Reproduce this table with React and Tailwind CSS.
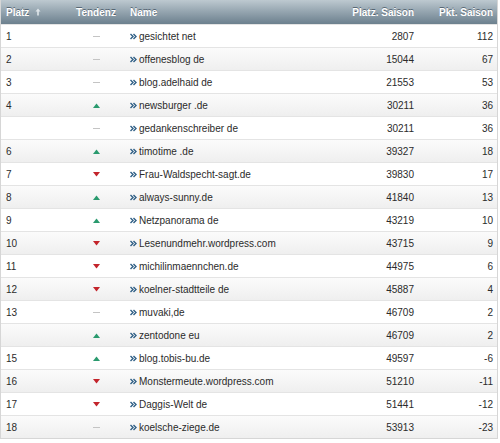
import React from 'react';

const rows = [
  ['1', 'same', 'gesichtet net', '2807', '112'],
  ['2', 'same', 'offenesblog de', '15044', '67'],
  ['3', 'same', 'blog.adelhaid de', '21553', '53'],
  ['4', 'up', 'newsburger .de', '30211', '36'],
  ['', 'same', 'gedankenschreiber de', '30211', '36'],
  ['6', 'up', 'timotime .de', '39327', '18'],
  ['7', 'down', 'Frau-Waldspecht-sagt.de', '39830', '17'],
  ['8', 'up', 'always-sunny.de', '41840', '13'],
  ['9', 'up', 'Netzpanorama de', '43219', '10'],
  ['10', 'down', 'Lesenundmehr.wordpress.com', '43715', '9'],
  ['11', 'down', 'michilinmaennchen.de', '44975', '6'],
  ['12', 'down', 'koelner-stadtteile de', '45887', '4'],
  ['13', 'same', 'muvaki,de', '46709', '2'],
  ['', 'up', 'zentodone eu', '46709', '2'],
  ['15', 'up', 'blog.tobis-bu.de', '49597', '-6'],
  ['16', 'down', 'Monstermeute.wordpress.com', '51210', '-11'],
  ['17', 'down', 'Daggis-Welt de', '51441', '-12'],
  ['18', 'same', 'koelsche-ziege.de', '53913', '-23'],
];

const cols = 'grid grid-cols-[66px_58px_1fr_82px_75px]';

function Trend({ t }) {
  if (t === 'up')
    return (
      <svg width="7" height="5" viewBox="0 0 7 5">
        <path d="M0 5 L3.5 0.5 L7 5 Z" fill="#2a9a6e" />
      </svg>
    );
  if (t === 'down')
    return (
      <svg width="7" height="5" viewBox="0 0 7 5">
        <path d="M0 0 L7 0 L3.5 4.5 Z" fill="#c3242b" />
      </svg>
    );
  return <span className="block w-[7px] h-px bg-[#c4c4c4]" />;
}

function Chevrons() {
  return (
    <svg width="7" height="7" viewBox="0 0 7 7" className="mr-[2px] shrink-0">
      <path d="M0.5 1 L3 3.5 L0.5 6 M3.5 1 L6 3.5 L3.5 6" fill="none" stroke="#2f5f86" strokeWidth="1.4" />
    </svg>
  );
}

export default function App() {
  return (
    <div className="w-[498px] bg-white text-[10px] text-[#2b2b2b] font-['Liberation_Sans',Arial,sans-serif]">
      <div className="border-x border-b border-[#d6d6d6]">
        <div
          className={`${cols} h-6 items-center font-bold text-white bg-gradient-to-b from-[#bdc9d0] to-[#6c808e] [text-shadow:0_-1px_0_rgba(40,55,70,0.6)]`}
        >
          <div className="pl-[5px] flex items-center gap-[6px]">
            Platz
            <svg width="6" height="8" viewBox="0 0 6 8">
              <path d="M3 0.5 L5.5 3.5 L3.8 3.5 L3.8 7.5 L2.2 7.5 L2.2 3.5 L0.5 3.5 Z" fill="#dfe6ea" />
            </svg>
          </div>
          <div className="text-center">Tendenz</div>
          <div className="pl-[5px]">Name</div>
          <div className="text-right pr-[8px]">Platz. Saison</div>
          <div className="text-right pr-[4px]">Pkt. Saison</div>
        </div>
        {rows.map((r, i) => (
          <div
            key={i}
            className={`${cols} h-[23px] items-center border-t border-[#e4e4e4] ${
              i % 2 === 1 ? 'bg-gradient-to-b from-[#fbfbfb] to-[#efefef]' : 'bg-white'
            }`}
          >
            <div className="pl-[5px]">{r[0]}</div>
            <div className="flex justify-center">
              <Trend t={r[1]} />
            </div>
            <div className="pl-[5px] flex items-center">
              <Chevrons />
              {r[2]}
            </div>
            <div className="text-right pr-[8px]">{r[3]}</div>
            <div className="text-right pr-[4px]">{r[4]}</div>
          </div>
        ))}
      </div>
    </div>
  );
}
